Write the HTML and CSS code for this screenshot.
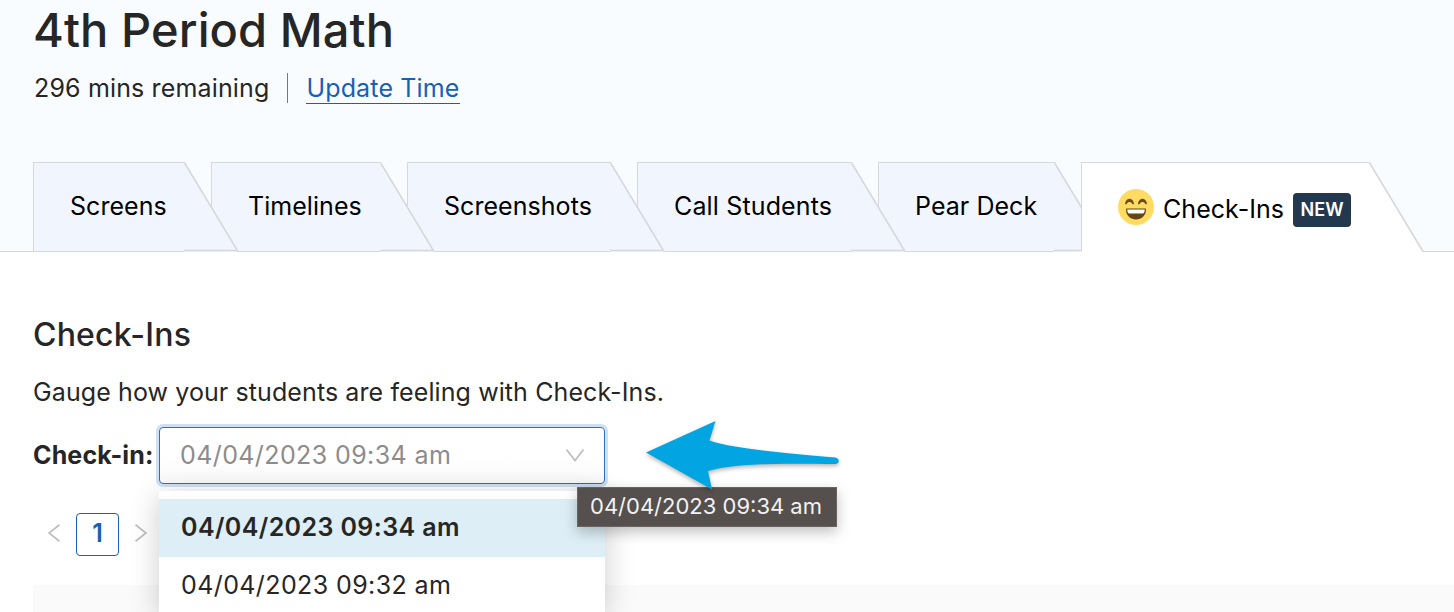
FILE: index.html
```html
<!DOCTYPE html>
<html lang="en">
<head>
    <meta charset="UTF-8">
    <meta name="viewport" content="width=device-width, initial-scale=1.0">
    <title>4th Period Math</title>
    <link rel="stylesheet" href="styles.css">
</head>
<body>

    <header class="header">
        <h1 class="title">4th Period Math</h1>
        <div class="session">
            <span class="remaining">296 mins remaining</span>
            <span class="divider"></span>
            <a class="update" href="#">Update Time</a>
        </div>

        <nav class="tabs">
            <a class="tab screens" href="#">
                <span class="tab-body"><span class="tab-label">Screens</span></span>
                <svg class="slant" width="55" height="90" viewBox="0 0 55 90"><path class="fill" d="M0 0H0.5L54 89V90H0Z"/><path class="edge" d="M0.3 0.5L54 89.5"/><path class="base" d="M0 88.5H53"/></svg>
            </a>
            <a class="tab timelines" href="#">
                <span class="tab-body"><span class="tab-label">Timelines</span></span>
                <svg class="slant" width="55" height="90" viewBox="0 0 55 90"><path class="fill" d="M0 0H0.5L54 89V90H0Z"/><path class="edge" d="M0.3 0.5L54 89.5"/><path class="base" d="M0 88.5H53"/></svg>
            </a>
            <a class="tab screenshots" href="#">
                <span class="tab-body"><span class="tab-label">Screenshots</span></span>
                <svg class="slant" width="55" height="90" viewBox="0 0 55 90"><path class="fill" d="M0 0H0.5L54 89V90H0Z"/><path class="edge" d="M0.3 0.5L54 89.5"/><path class="base" d="M0 88.5H53"/></svg>
            </a>
            <a class="tab call" href="#">
                <span class="tab-body"><span class="tab-label">Call Students</span></span>
                <svg class="slant" width="55" height="90" viewBox="0 0 55 90"><path class="fill" d="M0 0H0.5L54 89V90H0Z"/><path class="edge" d="M0.3 0.5L54 89.5"/><path class="base" d="M0 88.5H53"/></svg>
            </a>
            <a class="tab pear" href="#">
                <span class="tab-body"><span class="tab-label">Pear Deck</span></span>
                <svg class="slant" width="55" height="90" viewBox="0 0 55 90"><path class="fill" d="M0 0H0.5L54 89V90H0Z"/><path class="edge" d="M0.3 0.5L54 89.5"/><path class="base" d="M0 88.5H53"/></svg>
            </a>
            <a class="tab active" href="#">
                <span class="tab-body">
                    <svg class="emoji" width="36" height="36" viewBox="0 0 36 36">
                        <circle cx="18" cy="18" r="18" fill="#ffdb63"/>
                        <path d="M7 14.6C8 8 15 8 16 14.6C15.800 15.800 14.600 15.400 14.200 14.800C13 12.400 10 12.400 8.800 14.800C8.400 15.400 7.200 15.800 7 14.6ZM20 14.6C21 8 28 8 29 14.6C28.800 15.800 27.600 15.400 27.200 14.800C26 12.400 23 12.400 21.800 14.800C21.400 15.400 20.200 15.800 20 14.6Z" fill="#6b4c16"/>
                        <path d="M8 20.4Q8 19.6 9 19.6H27Q28 19.6 28 20.4C28 26.5 23.5 30.4 18 30.4S8 26.5 8 20.4Z" fill="#664514"/>
                        <path d="M9.3 20.6H26.7Q26.7 24.4 25 24.4H11Q9.3 24.4 9.3 20.6Z" fill="#fff"/>
                    </svg>
                    <span class="tab-label">Check-Ins</span>
                    <span class="badge">NEW</span>
                </span>
                <svg class="slant" width="55" height="90" viewBox="0 0 55 90"><path class="fill" d="M0 0H0.5L54 89V90H0Z"/><path class="edge" d="M0.3 0.5L54 89.5"/></svg>
            </a>
        </nav>
    </header>

    <main class="content">
        <h2 class="heading">Check-Ins</h2>
        <p class="intro">Gauge how your students are feeling with Check-Ins.</p>

        <div class="field">
            <span class="field-label">Check-in:</span>
            <div class="select">
                <span class="select-value">04/04/2023 09:34 am</span>
                <svg class="chevron" width="20" height="14" viewBox="0 0 20 14"><path d="M1.5 1.5L10 12.5L18.5 1.5"/></svg>
                <div class="dropdown">
                    <div class="option selected">04/04/2023 09:34 am</div>
                    <div class="option">04/04/2023 09:32 am</div>
                </div>
            </div>
        </div>

        <div class="pager">
            <svg class="pager-arrow" width="12" height="18" viewBox="0 0 12 18"><path d="M11.5 0.8L1 9L11.5 17.2"/></svg>
            <span class="page">1</span>
            <svg class="pager-arrow" width="12" height="18" viewBox="0 0 12 18"><path d="M0.5 0.8L11 9L0.5 17.2"/></svg>
        </div>

        <div class="table-head"></div>
    </main>

    <div class="tooltip">04/04/2023 09:34 am</div>
    <svg class="pointer" width="200" height="76" viewBox="0 0 200 76">
        <path d="M6 35.500L75.5 4L69.500 23.500C92 31 132 35 195 40.500C200 41 200 47 195 47C140 46.500 95 46 68 54L72 72.500Z"/>
    </svg>

</body>
</html>
```

FILE: styles.css
```css
* {
    box-sizing: border-box;
}
body {
    margin: 0;
    width: 1454px;
    height: 612px;
    overflow: hidden;
    position: relative;
    background: #fff;
    color: #262626;
    font-family: Inter, 'Liberation Sans', sans-serif;
    font-size: 25px;
    line-height: 30px;
    letter-spacing: 0.1px;
}
h1, h2, p {
    margin: 0;
}
a {
    text-decoration: none;
}

/* header */
.header {
    height: 252px;
    padding: 3px 33px 0;
    background: #f9fcff;
    border-bottom: 1px solid #d5d8dc;
}
.title {
    height: 56px;
    font-size: 47px;
    line-height: 54px;
    font-weight: 500;
    letter-spacing: 0.1px;
}
.session {
    display: flex;
    height: 103px;
    padding-top: 14px;
    letter-spacing: 0.15px;
}
.remaining {
    padding-left: 1px;
}
.divider {
    width: 1px;
    height: 30px;
    margin: 0 18px;
    background: #777;
}
.update {
    height: 31px;
    color: #1661b5;
    border-bottom: 1px solid #1661b5;
}

/* tabs */
.tabs {
    display: flex;
    height: 90px;
}
.tab {
    position: relative;
    display: flex;
    margin-right: -28px;
    height: 90px;
    color: #000;
    letter-spacing: 0.05px;
}
.tab-body {
    display: flex;
    align-items: center;
    height: 90px;
    padding: 0 0 2px 36px;
    background: #f1f5fd;
    border: 1px solid #d5d8dc;
    border-right: 0;
}
.slant {
    display: block;
}
.slant .fill {
    fill: #f1f5fd;
}
.slant .edge, .slant .base {
    fill: none;
    stroke: #d5d8dc;
    stroke-width: 1.6;
}
.screens { z-index: 5; }
.timelines { z-index: 4; }
.screenshots { z-index: 3; }
.call { z-index: 2; letter-spacing: 0.15px; }
.pear { z-index: 1; }
.active { z-index: 6; }
.screens .tab-body { width: 151px; }
.timelines .tab-body { width: 169px; }
.screenshots .tab-body { width: 203px; }
.call .tab-body { width: 214px; }
.pear .tab-body { width: 176px; }
.active .tab-body {
    width: 288px;
    padding: 4px 0 0 36px;
    background: #fff;
    border-bottom-color: #fff;
}
.active .tab-label {
    letter-spacing: 0.05px;
}
.active .fill {
    fill: #fff;
}
.emoji {
    margin: -5px 9px 0 0;
}
.badge {
    width: 58px;
    height: 34px;
    margin: 2px 0 0 9px;
    border-radius: 4px;
    background: #22384f;
    color: #fff;
    font-size: 18px;
    line-height: 34px;
    font-weight: 600;
    text-align: center;
}

/* content */
.content {
    padding: 63px 0 0 33px;
}
.heading {
    height: 62px;
    font-size: 32px;
    line-height: 40px;
    font-weight: 500;
    letter-spacing: 0.2px;
}
.intro {
    height: 50px;
}
.field {
    display: flex;
    align-items: center;
    height: 57px;
}
.field-label {
    width: 126px;
    padding-bottom: 2px;
    font-weight: 700;
    letter-spacing: 0.15px;
}
.select {
    position: relative;
    display: flex;
    align-items: center;
    justify-content: space-between;
    width: 446px;
    height: 57px;
    padding: 0 19px 2px 20px;
    border: 1px solid #2c72b4;
    border-radius: 4px;
    background: linear-gradient(#fff 50%, #fafafa);
    box-shadow: 0 0 0 3px #d0e0f4;
    letter-spacing: 0.4px;
}
.select-value {
    color: #8c8c8c;
}
.chevron {
    fill: none;
    stroke: #bfbfbf;
    stroke-width: 1.8;
}
.dropdown {
    position: absolute;
    top: 63px;
    left: -1px;
    width: 446px;
    height: 121px;
    padding-top: 8px;
    background: #fff;
    box-shadow: 0 5px 28px rgba(0, 0, 0, 0.2);
    z-index: 2;
}
.option {
    height: 58px;
    padding-left: 22px;
    line-height: 56px;
}
.selected {
    background: #ddeef6;
    font-weight: 600;
}
.pager {
    display: flex;
    align-items: center;
    height: 43px;
    margin-top: 29px;
    padding-left: 15px;
    gap: 16px;
}
.pager-arrow {
    margin-top: -3px;
    fill: none;
    stroke: #bfbfbf;
    stroke-width: 1.8;
}
.page {
    width: 43px;
    height: 43px;
    border: 1px solid #1661b5;
    border-radius: 4px;
    color: #1661b5;
    line-height: 38px;
    font-weight: 600;
    text-align: center;
}
.table-head {
    height: 27px;
    margin-top: 29px;
    background: #fafafa;
}

/* overlays */
.tooltip {
    position: absolute;
    left: 577px;
    top: 487px;
    width: 260px;
    height: 40px;
    padding-right: 2px;
    border: 1px solid #696361;
    background: #554f4d;
    box-shadow: 0 5px 14px rgba(0, 0, 0, 0.25);
    color: #f2f2f2;
    font-size: 22px;
    line-height: 37px;
    letter-spacing: 0;
    text-align: center;
    z-index: 5;
}
.pointer {
    position: absolute;
    left: 640px;
    top: 417px;
    fill: #02a5e2;
    filter: drop-shadow(0 2px 2px rgba(0, 0, 0, 0.3));
    z-index: 6;
}
```
